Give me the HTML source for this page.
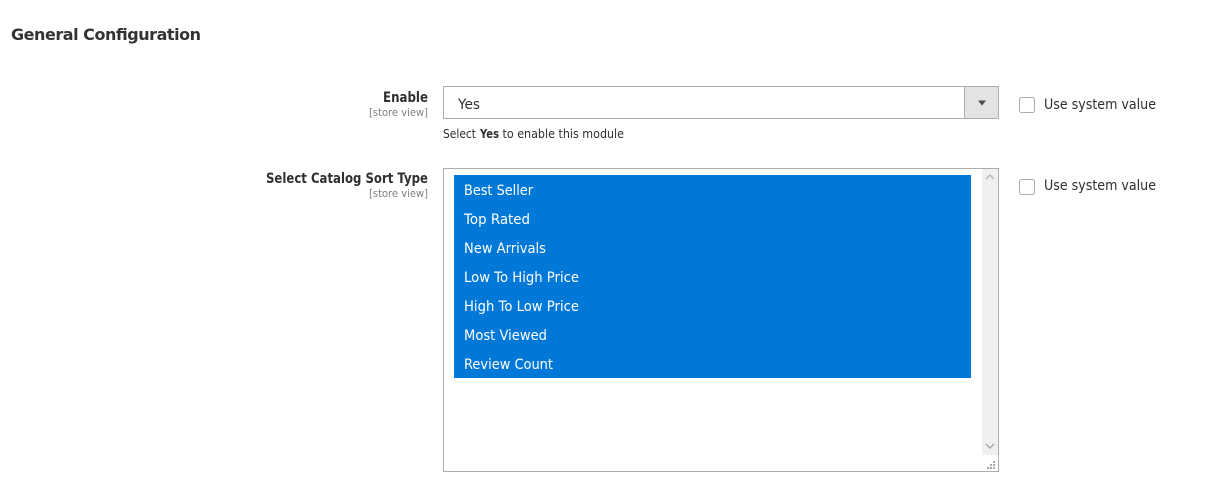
<!DOCTYPE html>
<html lang="en">
<head>
<meta charset="utf-8">
<title>General Configuration</title>
<style>
html,body{margin:0;padding:0;background:#fff;width:1228px;height:490px;overflow:hidden}
svg{display:block}
text{font-family:"DejaVu Sans","Liberation Sans",sans-serif;fill:#303030}
.l{font-size:14px;font-weight:700}
.s{font-size:11px;fill:#808080}
.o{font-size:14.5px;fill:#fff}
.u{font-size:14.5px;fill:#303030}
.h{font-size:12px}
</style>
</head>
<body>
<svg width="1228" height="490" viewBox="0 0 1228 490" xmlns="http://www.w3.org/2000/svg">
<rect width="1228" height="490" fill="#fff"/>
<text x="11" y="40" style="font-size:16px;font-weight:700;fill:#333" textLength="190" lengthAdjust="spacing">General Configuration</text>

<text class="l" x="383" y="102" textLength="45" lengthAdjust="spacingAndGlyphs">Enable</text>
<text class="s" x="369" y="116" textLength="59" lengthAdjust="spacingAndGlyphs">[store view]</text>
<rect x="443.5" y="86.5" width="555" height="32" fill="#fff" stroke="#adadad"/>
<rect x="965" y="87" width="33" height="31" fill="#e3e3e3"/>
<line x1="964.5" y1="87" x2="964.5" y2="118" stroke="#adadad"/>
<path d="M978 100.5h8l-4 5z" fill="#514943"/>
<text x="458" y="109" style="font-size:14.5px" textLength="22" lengthAdjust="spacingAndGlyphs">Yes</text>
<text class="h" x="443" y="138" textLength="33" lengthAdjust="spacingAndGlyphs">Select</text>
<text class="h" x="480" y="138" font-weight="700" textLength="19" lengthAdjust="spacingAndGlyphs">Yes</text>
<text class="h" x="502.5" y="138" textLength="121.5" lengthAdjust="spacingAndGlyphs">to enable this module</text>
<rect x="1019.5" y="97.5" width="15" height="15" rx="2" fill="#fff" stroke="#adadad"/>
<text class="u" x="1044" y="109" textLength="112" lengthAdjust="spacingAndGlyphs">Use system value</text>

<text class="l" x="266" y="183" textLength="162" lengthAdjust="spacingAndGlyphs">Select Catalog Sort Type</text>
<text class="s" x="369" y="197" textLength="59" lengthAdjust="spacingAndGlyphs">[store view]</text>
<rect x="443.5" y="168.5" width="555" height="303" fill="#fff" stroke="#adadad"/>
<rect x="454" y="175" width="517" height="203" fill="#0078d7"/>
<rect x="982" y="169" width="16" height="286" fill="#f0f0f0"/>
<path d="M986 179l4-4 4 4" fill="none" stroke="#b8b8b8" stroke-width="1.5"/>
<path d="M986 444l4 4 4-4" fill="none" stroke="#a8a8a8" stroke-width="1.5"/>
<g fill="#a8a8a8">
<rect x="993" y="461" width="2" height="2"/>
<rect x="990" y="464" width="2" height="2"/><rect x="993" y="464" width="2" height="2"/>
<rect x="987" y="467" width="2" height="2"/><rect x="990" y="467" width="2" height="2"/><rect x="993" y="467" width="2" height="2"/>
</g>
<text class="o" x="464" y="195" textLength="69" lengthAdjust="spacingAndGlyphs">Best Seller</text>
<text class="o" x="464" y="224" textLength="66" lengthAdjust="spacingAndGlyphs">Top Rated</text>
<text class="o" x="464" y="253" textLength="82" lengthAdjust="spacingAndGlyphs">New Arrivals</text>
<text class="o" x="464" y="282" textLength="115" lengthAdjust="spacingAndGlyphs">Low To High Price</text>
<text class="o" x="464" y="311" textLength="115" lengthAdjust="spacingAndGlyphs">High To Low Price</text>
<text class="o" x="464" y="340" textLength="83" lengthAdjust="spacingAndGlyphs">Most Viewed</text>
<text class="o" x="464" y="369" textLength="89" lengthAdjust="spacingAndGlyphs">Review Count</text>
<rect x="1019.5" y="179.5" width="15" height="15" rx="2" fill="#fff" stroke="#adadad"/>
<text class="u" x="1044" y="190" textLength="112" lengthAdjust="spacingAndGlyphs">Use system value</text>
</svg>
</body>
</html>
